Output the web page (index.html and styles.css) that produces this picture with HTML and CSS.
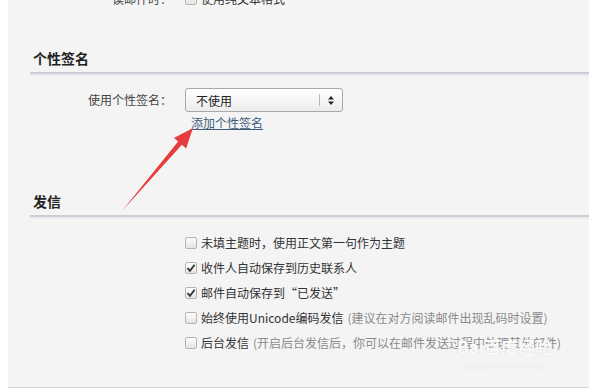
FILE: index.html
```html
<!DOCTYPE html>
<html lang="zh-CN">
<head>
  <meta charset="UTF-8">
  <title>邮箱设置</title>
  <meta name="viewport" content="width=device-width, initial-scale=1.0">
  <link rel="stylesheet" href="styles.css">
</head>
<body>

<div class="page">
  <!-- 上一节的最后一行，只露出一半 -->
  <div class="row top-row">
    <label class="row-label">读邮件时：</label>
    <span class="check"><span class="box"></span>使用纯文本格式</span>
  </div>

  <!-- 个性签名 -->
  <h3 class="section-title sign-title">个性签名</h3>
  <div class="row sign-row">
    <label class="row-label">使用个性签名：</label>
    <div class="field">
      <div class="select">
        <span class="select-text">不使用</span>
        <span class="select-sep"></span>
        <svg class="select-arrow" width="6" height="9" viewBox="0 0 6 9">
          <path d="M3 0 L6 3.4 L0 3.4 Z M3 9 L6 5.6 L0 5.6 Z" fill="#222"/>
        </svg>
      </div>
      <a class="add-link" href="#">添加个性签名</a>
    </div>
  </div>

  <!-- 发信 -->
  <h3 class="section-title send-title">发信</h3>
  <ul class="options">
    <li class="check"><span class="box"></span>未填主题时，使用正文第一句作为主题</li>
    <li class="check"><span class="box checked"><svg width="10" height="10" viewBox="0 0 10 10"><path d="M1.5 5.2 L4 7.8 L8.6 1.8" fill="none" stroke="#333" stroke-width="1.8"/></svg></span>收件人自动保存到历史联系人</li>
    <li class="check"><span class="box checked"><svg width="10" height="10" viewBox="0 0 10 10"><path d="M1.5 5.2 L4 7.8 L8.6 1.8" fill="none" stroke="#333" stroke-width="1.8"/></svg></span>邮件自动保存到“已发送”</li>
    <li class="check"><span class="box"></span>始终使用Unicode编码发信<span class="note">(建议在对方阅读邮件出现乱码时设置)</span></li>
    <li class="check"><span class="box"></span>后台发信<span class="note">(开启后台发信后，你可以在邮件发送过程中处理其他邮件)</span></li>
  </ul>
</div>

<!-- 水印 -->
<div class="watermark">
  <span class="wm-logo">Bai百度经验</span>
  <span class="wm-url">jingyan.baidu.com</span>
</div>

<!-- 红色标注箭头 -->
<svg class="annot" width="589" height="389" viewBox="0 0 589 389">
  <polygon points="122,211 178.1,141.6 173.9,138 193,128 186.1,148.4 181.9,144.8" fill="#e63c3c"/>
</svg>

</body>
</html>
```

FILE: styles.css
```css
* { margin: 0; padding: 0; box-sizing: border-box; }
html, body {
  width: 100%;
  height: 100%;
  background: #fff;
  font-family: "Noto Sans CJK SC", "Liberation Sans", sans-serif;
  font-size: 12px;
  color: #333;
  overflow: hidden;
}
.page {
  display: flow-root;
  margin-left: 8px;
  height: 388px;
  background: #f4f4f4;
  border-bottom: 1px solid #d9d9d9;
}
.row {
  display: flex;
  align-items: flex-start;
}
.row-label {
  width: 164px;
  flex: none;
  text-align: right;
  margin-right: 13px;
  line-height: 24px;
  color: #444;
}
.top-row {
  margin-top: -14px;
  align-items: center;
}
.top-row .check {
  line-height: 24px;
}
.section-title {
  margin-left: 22px;
  padding-left: 3px;
  padding-bottom: 4px;
  font-size: 14px;
  line-height: 20px;
  font-weight: bold;
  color: #222;
  border-bottom: 2px solid #cdcdd5;
  box-shadow: 0 2px 0 #ececf0;
}
.sign-title { margin-top: 37px; }
.send-title { margin-top: 60px; }
.sign-row { margin-top: 14px; }
.field {
  display: flex;
  flex-direction: column;
  align-items: flex-start;
}
.select {
  width: 158px;
  height: 24px;
  display: flex;
  align-items: center;
  border: 1px solid #a8a8a8;
  border-radius: 3px;
  background: linear-gradient(#ffffff, #ececec);
}
.select-text {
  flex: 1;
  padding-left: 10px;
  color: #222;
}
.select-sep {
  width: 1px;
  height: 12px;
  background: #b8b8b8;
  margin-right: 8px;
}
.select-arrow {
  margin-right: 8px;
}
.add-link {
  margin-top: 3px;
  margin-left: 6px;
  line-height: 16px;
  color: #3e5c7c;
  text-decoration: underline;
}
.options {
  list-style: none;
  margin-top: 13px;
  padding-left: 177px;
}
.check {
  display: flex;
  align-items: center;
  height: 25px;
  white-space: nowrap;
}
.box {
  width: 12px;
  height: 12px;
  flex: none;
  display: flex;
  align-items: center;
  justify-content: center;
  margin-right: 4px;
  border: 1px solid #b4b4b4;
  border-radius: 2px;
  background: linear-gradient(#fdfdfd, #e4e4e4);
}
.note {
  margin-left: 4px;
  color: #8a8a8a;
}
.watermark {
  position: absolute;
  left: 452px;
  top: 336px;
  width: 105px;
  display: flex;
  flex-direction: column;
  align-items: center;
  color: #fafafa;
  pointer-events: none;
}
.wm-logo {
  font-size: 17px;
  font-weight: bold;
  line-height: 22px;
  text-shadow: 0 0 1px #cfcfcf;
}
.wm-url {
  font-family: "Liberation Serif", serif;
  font-size: 11px;
  line-height: 14px;
  text-shadow: 0 0 1px #d4d4d4;
}
.annot {
  position: absolute;
  left: 0;
  top: 0;
  pointer-events: none;
}
```
